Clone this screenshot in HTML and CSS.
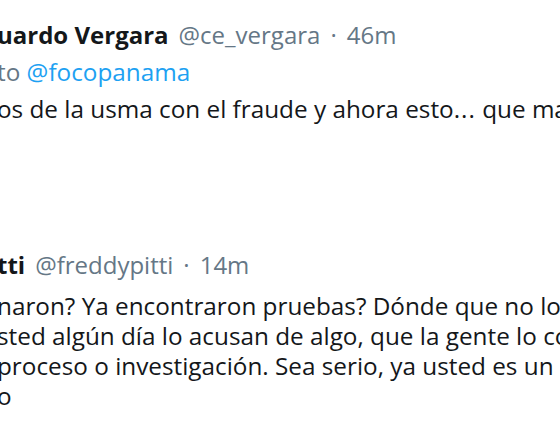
FILE: index.html
```html
<!DOCTYPE html>
<html>
<head>
  <title>Replies</title>
  <link rel="stylesheet" href="styles.css">
</head>
<body>
  <div class="timeline">
    <div class="tweet first">
      <div class="tweet-header">
        <span class="fullname">uardo Vergara</span>
        <span class="username">@ce_vergara</span>
        <span class="dot">·</span>
        <span class="time">46m</span>
      </div>
      <div class="reply-to">to <a href="#">@focopanama</a></div>
      <p class="tweet-text">os de la usma con el fraude y ahora esto<span class="dots">...</span> que mal</p>
    </div>
    <div class="tweet">
      <div class="tweet-header">
        <span class="fullname">tti</span>
        <span class="username">@freddypitti</span>
        <span class="dot">·</span>
        <span class="time">14m</span>
      </div>
      <p class="tweet-text">naron? Ya encontraron pruebas? Dónde que no lo condenan<br>sted algún día lo acusan de algo, que la gente lo condene<br> proceso o investigación. Sea serio, ya usted es un político<br>o</p>
    </div>
  </div>
</body>
</html>
```

FILE: styles.css
```css
body {
  margin: 0;
  font-family: "Open Sans", sans-serif;
  font-size: 24.3px;
  color: #14171a;
  background: #fff;
  overflow: hidden;
}
.timeline {
  padding-top: 20px;
  margin-left: -3px;
  white-space: nowrap;
}
.tweet {
  line-height: 30px;
}
.tweet.first {
  padding-bottom: 126px;
}
.tweet-header {
  display: flex;
  align-items: baseline;
  font-size: 24px;
}
.fullname {
  font-weight: 700;
  margin-right: 10px;
}
.username,
.time,
.dot,
.reply-to {
  color: #657786;
}
.dot {
  margin: 0 10px;
}
.reply-to {
  margin-top: 7px;
}
.reply-to a {
  color: #1da1f2;
  text-decoration: none;
}
.tweet-text {
  margin: 7px 0 0;
}
.dots {
  letter-spacing: 1px;
}
.tweet + .tweet .tweet-text {
  margin-top: 11px;
}
```
